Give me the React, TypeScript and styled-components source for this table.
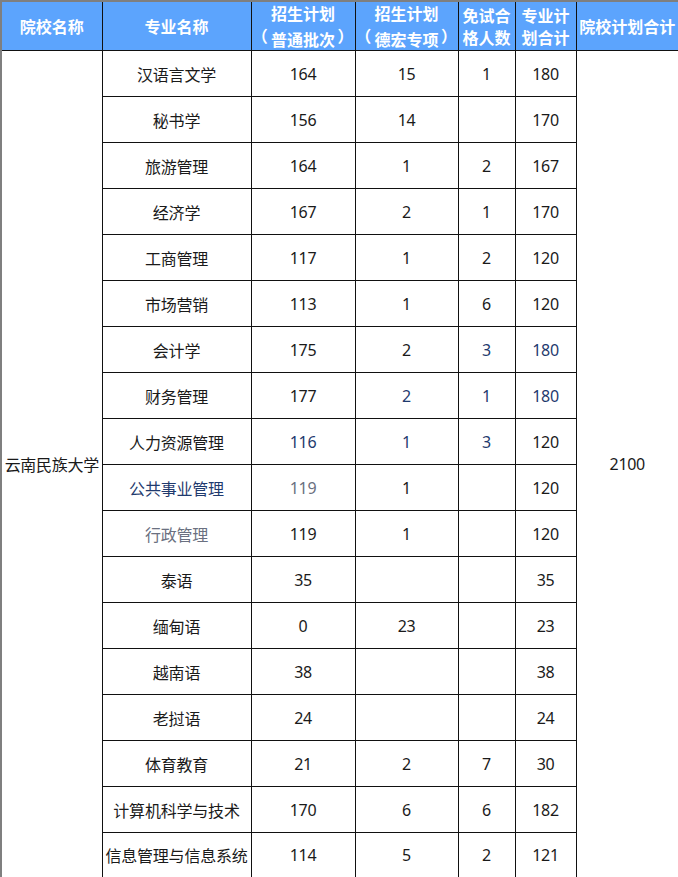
import React from 'react';
import styled, { createGlobalStyle } from 'styled-components';

type Tone = 'ink' | 'navy' | 'gray';

interface Row {
  major: string;
  majorTone?: Tone;
  normal: string;
  normalTone?: Tone;
  dehong: string;
  dehongTone?: Tone;
  exempt: string;
  exemptTone?: Tone;
  total: string;
  totalTone?: Tone;
}

const rows: Row[] = [
  { major: '汉语言文学', normal: '164', dehong: '15', exempt: '1', total: '180' },
  { major: '秘书学', normal: '156', dehong: '14', exempt: '', total: '170' },
  { major: '旅游管理', normal: '164', dehong: '1', exempt: '2', total: '167' },
  { major: '经济学', normal: '167', dehong: '2', exempt: '1', total: '170' },
  { major: '工商管理', normal: '117', dehong: '1', exempt: '2', total: '120' },
  { major: '市场营销', normal: '113', dehong: '1', exempt: '6', total: '120' },
  { major: '会计学', normal: '175', dehong: '2', exempt: '3', exemptTone: 'navy', total: '180', totalTone: 'navy' },
  { major: '财务管理', normal: '177', dehong: '2', dehongTone: 'navy', exempt: '1', exemptTone: 'navy', total: '180', totalTone: 'navy' },
  { major: '人力资源管理', normal: '116', normalTone: 'navy', dehong: '1', dehongTone: 'navy', exempt: '3', exemptTone: 'navy', total: '120' },
  { major: '公共事业管理', majorTone: 'navy', normal: '119', normalTone: 'gray', dehong: '1', exempt: '', total: '120' },
  { major: '行政管理', majorTone: 'gray', normal: '119', dehong: '1', exempt: '', total: '120' },
  { major: '泰语', normal: '35', dehong: '', exempt: '', total: '35' },
  { major: '缅甸语', normal: '0', dehong: '23', exempt: '', total: '23' },
  { major: '越南语', normal: '38', dehong: '', exempt: '', total: '38' },
  { major: '老挝语', normal: '24', dehong: '', exempt: '', total: '24' },
  { major: '体育教育', normal: '21', dehong: '2', exempt: '7', total: '30' },
  { major: '计算机科学与技术', normal: '170', dehong: '6', exempt: '6', total: '182' },
  { major: '信息管理与信息系统', normal: '114', dehong: '5', exempt: '2', total: '121' },
];

const toneColor: Record<Tone, string> = {
  ink: '#1a1a1a',
  navy: '#1f3a6e',
  gray: '#6a7080',
};

const GlobalStyle = createGlobalStyle`
  html, body {
    margin: 0;
    padding: 0;
    background: #ffffff;
  }
  body {
    font-family: "Noto Sans", "Noto Sans CJK SC", sans-serif;
  }
`;

const Table = styled.table`
  width: 678px;
  table-layout: fixed;
  border-collapse: collapse;
  border: 2px solid #7f7f7f;
`;

const HeadRow = styled.tr`
  height: 46px;
  background: #5ca4fd;
`;

const HeadCell = styled.th`
  padding: 0;
  border: 1px solid #111;
  border-top: none;
  color: #ffffff;
  font-family: "Noto Sans CJK SC", sans-serif;
  font-size: 16px;
  font-weight: 700;
  line-height: 22px;
  text-align: center;
  vertical-align: middle;
  white-space: nowrap;

  &:first-child {
    border-left: none;
  }
  &:last-child {
    border-right: none;
  }
`;

// full-width bracket: ink pushed toward the outer side of its em box, as in the sheet font
const Paren = styled.span<{ $open?: boolean }>`
  display: inline-block;
  width: 0.8em;
  overflow: hidden;
  text-align: left;
  text-indent: ${(p) => (p.$open ? '-0.4em' : '0.15em')};
`;

const BodyRow = styled.tr`
  height: 46px;
`;

const Cell = styled.td<{ $tone?: Tone }>`
  padding: 0;
  border: 1px solid #111;
  color: ${(p) => toneColor[p.$tone ?? 'ink']};
  font-family: "Noto Sans", "Noto Sans CJK SC", sans-serif;
  font-size: 16px;
  text-align: center;
  vertical-align: middle;
  white-space: nowrap;
  letter-spacing: -0.3px;
`;

const MajorCell = styled(Cell)`
  font-family: "Noto Sans CJK SC", sans-serif;
  letter-spacing: -0.2px;
`;

const SpanCell = styled(Cell)`
  font-family: "Noto Sans CJK SC", sans-serif;
  border-bottom: none;

  &:first-child {
    border-left: none;
  }
`;

const TotalSpanCell = styled(Cell)`
  border-right: none;
  border-bottom: none;
`;

const Bracketed: React.FC<{ text: string }> = ({ text }) => (
  <>
    <Paren $open>（</Paren>
    {text}
    <Paren>）</Paren>
  </>
);

const App: React.FC = () => (
  <>
    <GlobalStyle />
    <Table>
      <colgroup>
        <col style={{ width: 101 }} />
        <col style={{ width: 149 }} />
        <col style={{ width: 104 }} />
        <col style={{ width: 103 }} />
        <col style={{ width: 57 }} />
        <col style={{ width: 61 }} />
        <col style={{ width: 103 }} />
      </colgroup>
      <thead>
        <HeadRow>
          <HeadCell>院校名称</HeadCell>
          <HeadCell>专业名称</HeadCell>
          <HeadCell>
            招生计划
            <br />
            <Bracketed text="普通批次" />
          </HeadCell>
          <HeadCell>
            招生计划
            <br />
            <Bracketed text="德宏专项" />
          </HeadCell>
          <HeadCell>
            免试合
            <br />
            格人数
          </HeadCell>
          <HeadCell>
            专业计
            <br />
            划合计
          </HeadCell>
          <HeadCell>院校计划合计</HeadCell>
        </HeadRow>
      </thead>
      <tbody>
        {rows.map((r, i) => (
          <BodyRow key={r.major}>
            {i === 0 && <SpanCell rowSpan={rows.length}>云南民族大学</SpanCell>}
            <MajorCell $tone={r.majorTone}>{r.major}</MajorCell>
            <Cell $tone={r.normalTone}>{r.normal}</Cell>
            <Cell $tone={r.dehongTone}>{r.dehong}</Cell>
            <Cell $tone={r.exemptTone}>{r.exempt}</Cell>
            <Cell $tone={r.totalTone}>{r.total}</Cell>
            {i === 0 && <TotalSpanCell rowSpan={rows.length}>2100</TotalSpanCell>}
          </BodyRow>
        ))}
      </tbody>
    </Table>
  </>
);

export default App;
